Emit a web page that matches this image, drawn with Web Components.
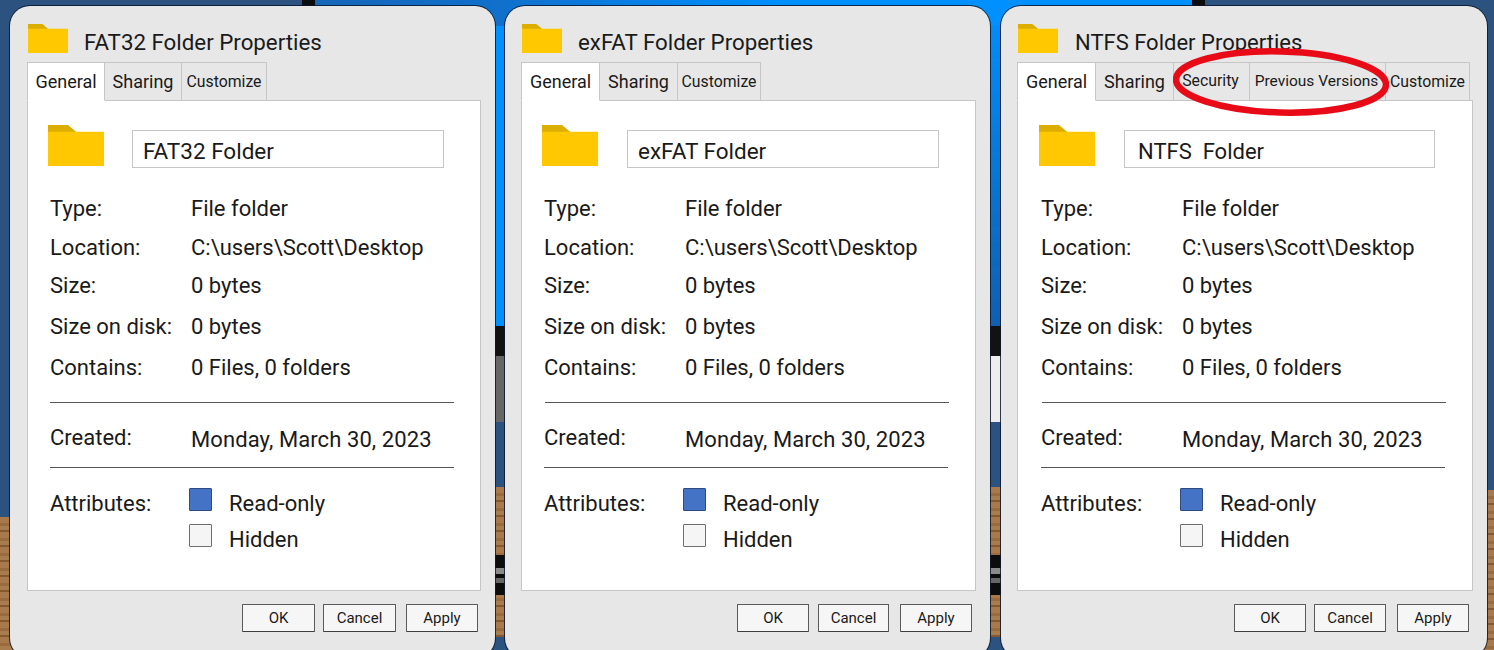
<!DOCTYPE html>
<html>
<head>
<meta charset="utf-8">
<title>Folder Properties</title>
<style>
  html, body { margin: 0; padding: 0; height: 650px; overflow: hidden; background: #2c5280; }
</style>
</head>
<body>
<desk-top>
  <prop-dialog caption="FAT32 Folder Properties" name="FAT32 Folder" w="485" pad="17" title-size="22.3" name-size="22.5" rows="22" icon="20" box="28" rule="0">
    <prop-tab slot="tabs" w="78" size="18" active>General</prop-tab>
    <prop-tab slot="tabs" w="77" size="18">Sharing</prop-tab>
    <prop-tab slot="tabs" w="85" size="15.8">Customize</prop-tab>
    <dlg-button slot="buttons" w="73">OK</dlg-button>
    <dlg-button slot="buttons" w="73" gap="8">Cancel</dlg-button>
    <dlg-button slot="buttons" w="72" gap="10">Apply</dlg-button>
  </prop-dialog>
  <prop-dialog caption="exFAT Folder Properties" name="exFAT Folder" w="485" pad="16" title-size="22.3" name-size="22.5" rows="22" icon="20" box="29" rule="1">
    <prop-tab slot="tabs" w="79" size="18" active>General</prop-tab>
    <prop-tab slot="tabs" w="78" size="18">Sharing</prop-tab>
    <prop-tab slot="tabs" w="83" size="15.8">Customize</prop-tab>
    <dlg-button slot="buttons" w="72">OK</dlg-button>
    <dlg-button slot="buttons" w="71" gap="9">Cancel</dlg-button>
    <dlg-button slot="buttons" w="72" gap="11">Apply</dlg-button>
  </prop-dialog>
  <prop-dialog caption="NTFS Folder Properties" name="NTFS  Folder" w="486" pad="16" title-size="22" title-top="6" title-gap="17" name-size="22" rows="23" icon="21" box="29" rule="1" name-pad="13" name-w="311" style="margin-left: 1px">
    <prop-tab slot="tabs" w="79" size="18" active>General</prop-tab>
    <prop-tab slot="tabs" w="78" size="18">Sharing</prop-tab>
    <prop-tab slot="tabs" w="76" size="15.8" lift>Security</prop-tab>
    <prop-tab slot="tabs" w="136" size="15.5" lift>Previous Versions</prop-tab>
    <prop-tab slot="tabs" w="84" size="15.8">Customize</prop-tab>
    <dlg-button slot="buttons" w="72">OK</dlg-button>
    <dlg-button slot="buttons" w="72" gap="8">Cancel</dlg-button>
    <dlg-button slot="buttons" w="72" gap="11">Apply</dlg-button>
    <red-ring></red-ring>
  </prop-dialog>
</desk-top>

<script>
  // the wallpaper that shows between the windows
  class DeskTop extends HTMLElement {
    constructor() {
      super();
      this.attachShadow({ mode: 'open' });
      const wood = 'repeating-linear-gradient(180deg, #a9794c 0 6px, #9a6b3e 6px 9px, #a97c50 9px 13px, #85582f 13px 15px)';
      const lower = (mid) => `linear-gradient(180deg, transparent 0 326px, #121212 326px 356px, ${mid} 356px 422px, #2c5280 422px 487px, transparent 487px 555px, #0c0c0c 555px 568px, #8a8a8a 568px 574px, #0c0c0c 574px 578px, #666 578px 583px, #0c0c0c 583px 595px, transparent 595px 637px, #2c5280 637px)`;
      this.shadowRoot.innerHTML = `
        <style>
          :host {
            display: flex;
            width: 1494px;
            height: 650px;
            box-sizing: border-box;
            padding: 6px 0 0 10px;
            gap: 10px;
            overflow: hidden;
            background:
              linear-gradient(90deg, #2c5280 0 302px, #0c0c0c 302px 315px, #1566b8 315px, #1070cc 500px, #0090ff 780px, #0090ff 1192px, #0c0c0c 1192px 1205px, #2c5280 1205px) 0 0 / 1494px 26px no-repeat,
              ${lower('#666')} 480px 0 / 40px 650px no-repeat,
              ${lower('#eee')} 975px 0 / 40px 650px no-repeat,
              linear-gradient(180deg, #0090ff, #0090ff) 480px 0 / 40px 326px no-repeat,
              linear-gradient(180deg, #0090ff, #0f5fb0) 975px 0 / 40px 326px no-repeat,
              ${wood} 480px 487px / 40px 150px no-repeat,
              ${wood} 975px 487px / 40px 150px no-repeat,
              linear-gradient(180deg, #2c5280, #2c5280) 1400px 0 / 94px 490px no-repeat,
              ${wood} 1400px 490px / 94px 160px no-repeat,
              linear-gradient(180deg, #2c5280, #2c5280) 0 0 / 30px 517px no-repeat,
              ${wood} 0 517px / 30px 133px no-repeat;
          }
        </style>
        <slot></slot>`;
    }
  }

  // w/h go on the host so the same icon serves title bar and panel
  class FolderIcon extends HTMLElement {
    connectedCallback() {
      const w = this.getAttribute('w');
      const h = this.getAttribute('h');
      this.attachShadow({ mode: 'open' }).innerHTML = `
        <style>:host { display: block; width: ${w}px; height: ${h}px; } svg { display: block; }</style>
        <svg width="${w}" height="${h}" viewBox="0 0 56 40" preserveAspectRatio="none">
          <path d="M0 0H20L28 6.5V12H0Z" fill="#dcae00"/>
          <path d="M0 6.5H56V40H0Z" fill="#ffc800"/>
        </svg>`;
    }
  }

  class PropTab extends HTMLElement {
    connectedCallback() {
      const active = this.hasAttribute('active');
      const lift = this.hasAttribute('lift') ? 2 : 0;
      this.attachShadow({ mode: 'open' }).innerHTML = `
        <style>
          :host {
            display: flex;
            align-items: center;
            justify-content: center;
            box-sizing: border-box;
            width: ${this.getAttribute('w')}px;
            height: 39px;
            padding: 0 ${lift}px ${lift}px 0;
            margin-bottom: -1px;
            position: relative;
            z-index: ${active ? 1 : 0};
            border: 1px solid #c6c6c6;
            border-left-width: ${active ? 1 : 0}px;
            border-bottom-color: ${active ? '#fff' : '#c6c6c6'};
            background: ${active ? '#fff' : '#e7e7e7'};
            font-size: ${this.getAttribute('size')}px;
            white-space: nowrap;
          }
        </style>
        <slot></slot>`;
    }
  }

  class PropRow extends HTMLElement {
    connectedCallback() {
      this.attachShadow({ mode: 'open' }).innerHTML = `
        <style>
          :host {
            display: grid;
            grid-template-columns: 141px 1fr;
            align-items: center;
            height: 38px;
            margin-top: ${this.getAttribute('gap') || 0}px;
            white-space: nowrap;
          }
          .val {
            position: relative;
            top: ${this.getAttribute('dy') || 0}px;
            letter-spacing: ${this.getAttribute('track') || 0}px;
          }
        </style>
        <span>${this.getAttribute('label')}</span>
        <span class="val"><slot></slot></span>`;
    }
  }

  class CheckOption extends HTMLElement {
    connectedCallback() {
      const on = this.hasAttribute('checked');
      this.attachShadow({ mode: 'open' }).innerHTML = `
        <style>
          :host {
            display: flex;
            align-items: center;
            gap: 17px;
            height: 23px;
            margin-top: ${this.getAttribute('gap') || 0}px;
          }
          i {
            display: block;
            box-sizing: border-box;
            width: 23px;
            height: 23px;
            border: 1px solid ${on ? '#2f4a80' : '#6e6e6e'};
            border-radius: 1px;
            background: ${on ? '#4472c4' : '#f5f5f5'};
          }
          span { position: relative; top: 4px; }
        </style>
        <i></i><span><slot></slot></span>`;
    }
  }

  class DlgButton extends HTMLElement {
    connectedCallback() {
      this.attachShadow({ mode: 'open' }).innerHTML = `
        <style>
          :host {
            display: flex;
            align-items: center;
            justify-content: center;
            box-sizing: border-box;
            width: ${this.getAttribute('w')}px;
            height: 28px;
            margin-left: ${this.getAttribute('gap') || 0}px;
            border: 1px solid #5a5a5a;
            border-bottom-color: #3e3e3e;
            border-radius: 1px;
            background: #f6f6f6;
            font-size: 15px;
          }
        </style>
        <slot></slot>`;
    }
  }

  // hand drawn annotation over the tabs
  class RedRing extends HTMLElement {
    constructor() {
      super();
      this.attachShadow({ mode: 'open' }).innerHTML = `
        <style>
          :host { position: absolute; left: 172px; top: 42px; width: 216px; height: 68px; z-index: 5; }
          svg { display: block; }
        </style>
        <svg width="216" height="68" viewBox="0 0 216 68">
          <ellipse cx="108" cy="34" rx="105" ry="30.5" transform="rotate(1.5 108 34)" fill="none" stroke="#e80a16" stroke-width="6.5"/>
        </svg>`;
    }
  }

  class PropDialog extends HTMLElement {
    connectedCallback() {
      const attr = (k, d) => this.getAttribute(k) || d;
      const name = attr('name').replace(/  /g, ' &nbsp;');
      this.attachShadow({ mode: 'open' }).innerHTML = `
        <style>
          :host {
            display: flex;
            flex-direction: column;
            flex: none;
            position: relative;
            box-sizing: border-box;
            width: ${attr('w')}px;
            height: 652px;
            padding: 18px 14px 0 ${attr('pad')}px;
            background: #e7e7e7;
            border-radius: 20px;
            box-shadow: 0 0 0 1px rgba(12, 24, 44, .85);
            font-family: Roboto, "Liberation Sans", sans-serif;
            font-size: 22px;
            color: #1a1a1a;
          }
          .head { display: flex; align-items: flex-start; height: 38px; padding-left: 1px; }
          .head span {
            margin-left: ${attr('title-gap', 16)}px;
            position: relative;
            top: ${attr('title-top', 5)}px;
            white-space: nowrap;
            font-size: ${attr('title-size')}px;
          }
          .tabs { display: flex; position: relative; z-index: 1; }
          .panel {
            box-sizing: border-box;
            height: 491px;
            padding: 24px 0 0 0;
            background: #fff;
            border: 1px solid #c6c6c6;
          }
          .top { display: flex; align-items: flex-start; height: 64px; padding-left: ${attr('icon')}px; }
          .name {
            box-sizing: border-box;
            width: ${attr('name-w', 312)}px;
            height: 38px;
            margin: 5px 0 0 ${attr('box')}px;
            padding: 4px 0 0 ${attr('name-pad', 10)}px;
            display: flex;
            align-items: center;
            border: 1px solid #c6c6c6;
            white-space: pre;
            font-size: ${attr('name-size')}px;
          }
          .rows { padding-left: ${attr('rows')}px; }
          hr { width: 404px; height: 1px; border: 0; margin: 0; background: #555; }
          .rule1 { margin: 16px 0 0 ${attr('rule')}px; }
          .rule2 { margin-top: 11px; }
          .attrs { display: grid; grid-template-columns: 139px 1fr; margin-top: 20px; }
          .attrs > span { position: relative; top: 3px; }
          .buttons { display: flex; justify-content: flex-end; margin: 13px ${attr('pad') === '17' ? 3 : 4}px 0 0; }
        </style>
        <div class="head"><folder-icon w="40" h="29"></folder-icon><span>${attr('caption')}</span></div>
        <div class="tabs"><slot name="tabs"></slot></div>
        <div class="panel">
          <div class="top">
            <folder-icon w="56" h="41"></folder-icon>
            <div class="name">${name}</div>
          </div>
          <div class="rows">
            <prop-row label="Type:">File folder</prop-row>
            <prop-row label="Location:" gap="1">C:\\users\\Scott\\Desktop</prop-row>
            <prop-row label="Size:">0 bytes</prop-row>
            <prop-row label="Size on disk:" gap="3">0 bytes</prop-row>
            <prop-row label="Contains:" gap="3">0 Files, 0 folders</prop-row>
            <hr class="rule1">
            <prop-row label="Created:" gap="15" dy="2" track="0.09">Monday, March 30, 2023</prop-row>
            <hr class="rule2">
            <div class="attrs">
              <span>Attributes:</span>
              <div>
                <check-option checked>Read-only</check-option>
                <check-option gap="13">Hidden</check-option>
              </div>
            </div>
          </div>
        </div>
        <div class="buttons"><slot name="buttons"></slot></div>
        <slot></slot>`;
    }
  }

  customElements.define('desk-top', DeskTop);
  customElements.define('folder-icon', FolderIcon);
  customElements.define('prop-tab', PropTab);
  customElements.define('prop-row', PropRow);
  customElements.define('check-option', CheckOption);
  customElements.define('dlg-button', DlgButton);
  customElements.define('red-ring', RedRing);
  customElements.define('prop-dialog', PropDialog);
</script>
</body>
</html>
